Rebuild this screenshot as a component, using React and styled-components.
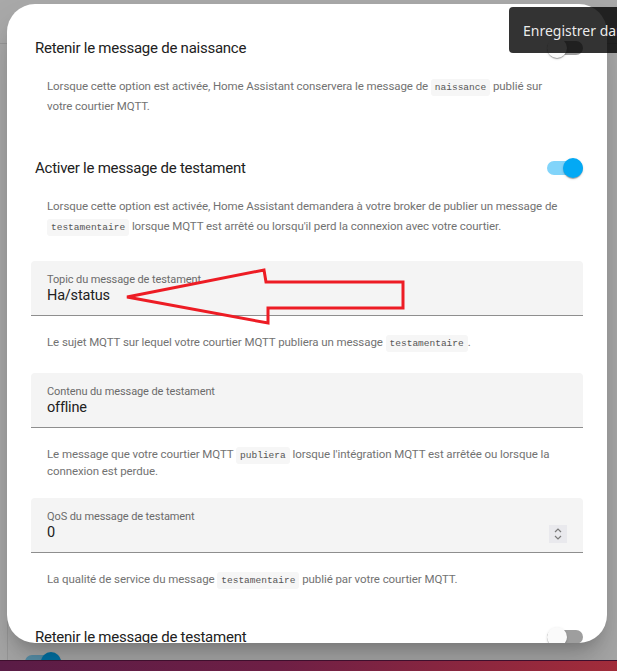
import styled, { createGlobalStyle } from "styled-components";

const GlobalStyle = createGlobalStyle`
  html, body {
    margin: 0;
    padding: 0;
    height: 100%;
    overflow: hidden;
  }
  body {
    font-family: Roboto, "Noto Sans", sans-serif;
  }
  #root {
    height: 100%;
  }
`;

const Screen = styled.div`
  position: relative;
  width: 617px;
  height: 671px;
  display: flex;
  flex-direction: column;
  overflow: hidden;
`;

const Page = styled.div`
  position: relative;
  flex: 1;
  display: flex;
  flex-direction: column;
  background: #fafafa;
  overflow: hidden;
`;

const PageHeader = styled.div`
  height: 43px;
  border-bottom: 1px solid #e0e0e0;
`;

const PageBody = styled.div`
  flex: 1;
  margin-left: 7px;
  border-left: 1px solid #e4e4e4;
  padding-left: 17px;
  display: flex;
  align-items: flex-end;
  overflow: hidden;
`;

const Scrim = styled.div`
  position: absolute;
  inset: 0;
  background: rgba(0, 0, 0, 0.32);
`;

const Taskbar = styled.div`
  height: 10px;
  border-top: 1px solid #3e0f2d;
  background: linear-gradient(90deg, #5a1c46 0%, #6e1f45 45%, #a22c3a 100%);
`;

const Dialog = styled.div`
  position: absolute;
  left: 7px;
  top: 4px;
  width: 600px;
  height: 639px;
  background: #ffffff;
  border-radius: 28px;
  overflow: hidden;
  box-shadow: 0 11px 15px -7px rgba(0, 0, 0, 0.2), 0 24px 38px 3px rgba(0, 0, 0, 0.14);
`;

const DialogContent = styled.div`
  padding: 24px 24px 0;
  display: flex;
  flex-direction: column;
`;

const SettingRow = styled.div`
  height: 40px;
  margin-top: ${(p) => p.$gap || 0}px;
  padding-left: 4px;
  display: flex;
  align-items: center;
  justify-content: space-between;
`;

const Heading = styled.span`
  font-size: 15px;
  letter-spacing: -0.25px;
  color: #212121;
`;

const Description = styled.p`
  margin: 8px 0 0;
  padding: 0 16px;
  font-size: 11.5px;
  letter-spacing: -0.08px;
  line-height: 20px;
  color: #727272;
`;

const Code = styled.code`
  font-family: "Liberation Mono", "DejaVu Sans Mono", monospace;
  font-size: 9.5px;
  line-height: 1;
  letter-spacing: 0;
  color: #555;
  background: #f6f6f6;
  padding: 3px 4px;
  border-radius: 3px;
`;

const Track = styled.div`
  position: relative;
  width: 36px;
  height: 20px;
  flex-shrink: 0;

  &::before {
    content: "";
    position: absolute;
    left: 0;
    right: 0;
    top: 3px;
    height: 14px;
    border-radius: 7px;
    background: ${(p) => (p.$on ? "#81d4fa" : "#9e9e9e")};
  }
`;

const Thumb = styled.div`
  position: absolute;
  top: 0;
  left: ${(p) => (p.$on ? 16 : 0)}px;
  width: 20px;
  height: 20px;
  border-radius: 50%;
  background: ${(p) => (p.$on ? "#03a9f4" : "#fafafa")};
  box-shadow: 0 2px 1px -1px rgba(0, 0, 0, 0.2), 0 1px 1px 0 rgba(0, 0, 0, 0.14),
    0 1px 3px 0 rgba(0, 0, 0, 0.12);
`;

function Switch({ on }) {
  return (
    <Track $on={on}>
      <Thumb $on={on} />
    </Track>
  );
}

const PageSwitch = styled.div`
  margin-bottom: -12px;
`;

const Field = styled.div`
  height: 54px;
  margin-top: ${(p) => p.$gap || 0}px;
  padding: 0 16px;
  background: #f4f4f4;
  border-radius: 4px 4px 0 0;
  border-bottom: 1px solid #8e8e8e;
  display: flex;
  justify-content: space-between;
`;

const FieldText = styled.div`
  padding-top: 12px;
  display: flex;
  flex-direction: column;
`;

const FieldLabel = styled.span`
  font-size: 11px;
  letter-spacing: -0.1px;
  line-height: 14px;
  color: #6b6b6b;
`;

const FieldValue = styled.span`
  font-size: 14.5px;
  letter-spacing: -0.2px;
  line-height: 18px;
  color: #212121;
`;

const Spinner = styled.div`
  margin-top: 27px;
  width: 18px;
  height: 18px;
  background: #e9e9ed;
  display: flex;
  align-items: center;
  justify-content: center;
`;

const Helper = styled.p`
  margin: 18px 0 0;
  padding: 0 16px;
  font-size: 11.5px;
  letter-spacing: -0.08px;
  line-height: 17px;
  color: #727272;
`;

const Tooltip = styled.div`
  position: absolute;
  left: 509px;
  top: 7px;
  height: 46px;
  padding: 0 14px;
  display: flex;
  align-items: center;
  white-space: nowrap;
  border-radius: 4px;
  background: rgba(0, 0, 0, 0.8);
  color: rgba(255, 255, 255, 0.92);
  font-family: "Noto Sans", "DejaVu Sans", sans-serif;
  font-size: 14px;
`;

const Annotation = styled.svg`
  position: absolute;
  left: 0;
  top: 0;
  pointer-events: none;
`;

export default function App() {
  return (
    <>
      <GlobalStyle />
      <Screen>
        <Page>
          <PageHeader />
          <PageBody>
            <PageSwitch>
              <Switch on />
            </PageSwitch>
          </PageBody>
          <Scrim />
          <Dialog>
            <DialogContent>
              <SettingRow>
                <Heading>Retenir le message de naissance</Heading>
                <Switch />
              </SettingRow>
              <Description>
                Lorsque cette option est activée, Home Assistant conservera le message de{" "}
                <Code>naissance</Code> publié sur votre courtier MQTT.
              </Description>

              <SettingRow $gap={32}>
                <Heading>Activer le message de testament</Heading>
                <Switch on />
              </SettingRow>
              <Description>
                Lorsque cette option est activée, Home Assistant demandera à votre broker de publier
                un message de <Code>testamentaire</Code> lorsque MQTT est arrêté ou lorsqu'il perd la
                connexion avec votre courtier.
              </Description>

              <Field $gap={25}>
                <FieldText>
                  <FieldLabel>Topic du message de testament</FieldLabel>
                  <FieldValue>Ha/status</FieldValue>
                </FieldText>
              </Field>
              <Helper>
                Le sujet MQTT sur lequel votre courtier MQTT publiera un message{" "}
                <Code>testamentaire</Code>.
              </Helper>

              <Field $gap={22}>
                <FieldText>
                  <FieldLabel>Contenu du message de testament</FieldLabel>
                  <FieldValue>offline</FieldValue>
                </FieldText>
              </Field>
              <Helper>
                Le message que votre courtier MQTT <Code>publiera</Code> lorsque l'intégration MQTT
                est arrêtée ou lorsque la connexion est perdue.
              </Helper>

              <Field $gap={18}>
                <FieldText>
                  <FieldLabel>QoS du message de testament</FieldLabel>
                  <FieldValue>0</FieldValue>
                </FieldText>
                <Spinner>
                  <svg width="10" height="14" viewBox="0 0 10 14" fill="none" stroke="#7a7a7a" strokeWidth="1.2">
                    <path d="M2 5l3-3 3 3" />
                    <path d="M2 9l3 3 3-3" />
                  </svg>
                </Spinner>
              </Field>
              <Helper>
                La qualité de service du message <Code>testamentaire</Code> publié par votre courtier
                MQTT.
              </Helper>

              <SettingRow $gap={29}>
                <Heading>Retenir le message de testament</Heading>
                <Switch />
              </SettingRow>
            </DialogContent>
          </Dialog>
        </Page>
        <Taskbar />
        <Tooltip>Enregistrer dans</Tooltip>
        <Annotation width="617" height="671" viewBox="0 0 617 671">
          <polygon
            points="127,297 264,270 266,282 403,282 403,308 268,308 268,323"
            fill="none"
            stroke="#ed1c24"
            strokeWidth="3"
            strokeLinejoin="miter"
          />
        </Annotation>
      </Screen>
    </>
  );
}
